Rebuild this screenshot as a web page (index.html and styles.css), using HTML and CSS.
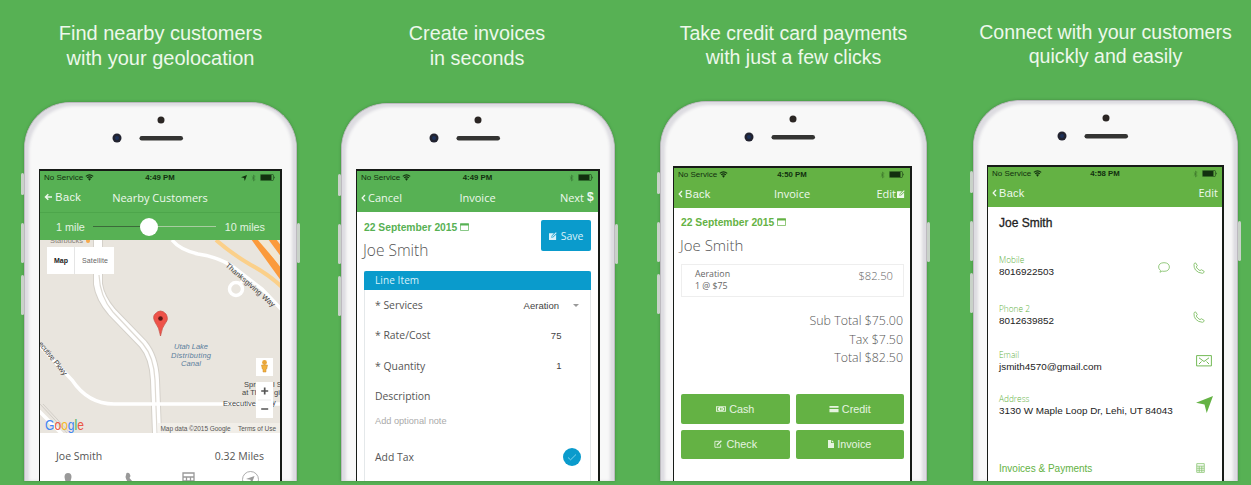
FILE: index.html
```html
<!DOCTYPE html>
<html lang="en">
<head>
<meta charset="utf-8">
<title>Mobile invoicing</title>
<link rel="stylesheet" href="styles.css">
</head>
<body>
<svg class="defs" width="0" height="0" aria-hidden="true">
  <symbol id="wifi" viewBox="0 0 10 8"><path d="M.8 2.700Q5-.7 9.200 2.700M2.300 4.400Q5 2.200 7.700 4.400" fill="none" stroke="currentColor" stroke-width="1.300"/><path d="M3.200 5.500Q5 4.200 6.800 5.500L5 7.600z" fill="currentColor"/></symbol>
  <symbol id="bt" viewBox="0 0 6 8"><path d="M1 2.200l4 3.600L3 7.500V.5l2 1.700L1 5.800" fill="none" stroke="currentColor" stroke-width=".7"/></symbol>
  <symbol id="battery" viewBox="0 0 16 7"><rect x=".4" y=".4" width="13" height="6.200" rx="1" fill="none" stroke="currentColor" stroke-width=".6"/><rect x="1" y="1" width="10.500" height="5" fill="currentColor"/><path d="M14.400 2.200q1.200 1.300 0 2.600z" fill="currentColor"/></symbol>
  <symbol id="nav" viewBox="0 0 10 10"><path d="M10 0L6.300 10 5 5 0 3.900z" fill="currentColor"/></symbol>
  <symbol id="chev" viewBox="0 0 5 8"><path d="M4 1L1.200 4 4 7" fill="none" stroke="currentColor" stroke-width="1.300"/></symbol>
  <symbol id="cal" viewBox="0 0 9 8"><path d="M.5.800h8v6.700h-8z" fill="none" stroke="currentColor" stroke-width=".7"/><path d="M.2.500h8.600v2H.2z" fill="currentColor"/></symbol>
  <symbol id="edit" viewBox="0 0 9 9"><path d="M0 1.500h5.500L3 4.200 2.600 6.500 5 6l3-3.200V9H0z" fill="currentColor"/><path d="M3.700 5.300L8.200.8" stroke="currentColor" stroke-width="1.200"/></symbol>
  <symbol id="editline" viewBox="0 0 9 9"><path d="M6 1.500H1v6.700h6.500V5" fill="none" stroke="currentColor"/><path d="M3.200 5.800L8.300.8" stroke="currentColor" stroke-width="1.500"/></symbol>
  <symbol id="phone" viewBox="0 0 12 12"><path d="M1 2.500Q1 1 2.600.900L4.300 3.600 3.200 5Q4.500 7.300 7 8.700L8.300 7.700 11.200 9.400Q11.100 11 9.500 11.300 5 11 2.500 8 .8 5.500 1 2.500z" fill="none" stroke="currentColor" stroke-width=".9" stroke-linejoin="round"/></symbol>
  <symbol id="calc" viewBox="0 0 12 13"><path d="M1 .7h10v11.600H1zM1 4h10M1 6.800h10M1 9.500h10M4.300 4v8M7.700 4v8" fill="none" stroke="currentColor" stroke-width="1.100"/></symbol>
  <symbol id="front" viewBox="0 0 100 34"><circle cx="50" cy="5" r="3.500" fill="#2b2624"/><circle cx="6" cy="23" r="4.500" fill="#222330"/><circle cx="6" cy="23" r="2" fill="#1d3159"/><rect x="28.500" y="21" width="43.500" height="4.500" rx="2.200" fill="#343433"/></symbol>
</svg>
<main class="gallery">

<section class="panel p1">
  <h2 class="caption">Find nearby customers<br>with your geolocation</h2>
  <div class="phone"><i class="key k1"></i><i class="key k2"></i><i class="key k3"></i><i class="key k4"></i>
    <svg class="front"><use href="#front"/></svg>
    <div class="screen">
      <div class="status"><span>No Service <svg class="wifi"><use href="#wifi"/></svg></span><b>4:49 PM</b><span class="end"><svg class="loc"><use href="#nav"/></svg><svg class="bt"><use href="#bt"/></svg><svg class="bat"><use href="#battery"/></svg></span></div>
      <div class="bar"><span class="arial"><svg class="arrow" viewBox="0 0 8 8"><path d="M8 4H1.500M4.300 1.200L1.500 4l2.800 2.800" fill="none" stroke="currentColor" stroke-width="1.500"/></svg> Back</span><span class="title">Nearby Customers</span><span></span></div>
      <div class="range"><span>1 mile</span><div class="track"><i class="knob"></i></div><span>10 miles</span></div>
      <svg class="map" viewBox="40 240 241 193">
        <rect x="40" y="240" width="241" height="193" fill="#e9e5de"/>
        <g fill="none" stroke="#fff">
          <path d="M98 240V284Q100 298 112 312L143 344Q154 357 155 380L157 433" stroke="#d5d1ca" stroke-width="10"/>
          <path d="M98 240V284Q100 298 112 312L143 344Q154 357 155 380L157 433" stroke-width="8"/>
          <path d="M99 275Q100 297 113 312L143 344Q154 357 155 380L157 433" stroke="#dedad3" stroke-width="1.200"/>
          <path d="M172 240Q180 250 198 254Q218 257 232 266L262 289L282 310" stroke-width="3.500"/>
          <path d="M40 346L72 380Q88 404 114 404H281" stroke-width="3.500"/>
          <path d="M38 410L62 434" stroke-width="3.500"/><path d="M40 404L68 434M43 404L71 434" stroke="#cbc8c2" stroke-width=".8"/>
          <circle cx="236" cy="289" r="6.500" stroke-width="3.500"/><path d="M240 284l4-5" stroke-width="3"/>
        </g>
        <path d="M216 240Q232 254 251 265Q268 274 282 287" fill="none" stroke="#fbd08a" stroke-width="4"/>
        <path d="M251 239h8l23 30v13zM268 239h8l6 8v11z" fill="#fb9a3c"/>
        <path d="M257 239h9l16 21v8z" fill="#f1e7d4"/>
        <g class="label">
          <text x="50" y="243" textLength="33" class="muted">Starbucks</text><circle cx="88" cy="241" r="2" fill="#f7a94b"/>
          <text transform="translate(225 266) rotate(41)" textLength="63">Thanksgiving Way</text>
          <text transform="translate(38 344) rotate(51)" textLength="41">ecutive Pkwy</text>
          <g class="water"><text x="174" y="349" textLength="34">Utah Lake</text><text x="171" y="357.500" textLength="40">Distributing</text><text x="181" y="366" textLength="20">Canal</text></g>
          <text x="244" y="387">Sprin</text><text x="273" y="387">l S</text><text x="242" y="394.500">at Th</text><text x="274" y="394.500">gi</text>
          <text x="223" y="406" textLength="33">Executive</text><text x="272" y="405">y</text>
        </g>
        <path d="M160.500 336Q159 327 155.500 323Q152 317 155 314Q160.500 308 166 314Q169 319 165.500 323Q162 327 160.500 336z" fill="#ee5249" stroke="#c54a41" stroke-width=".7"/><circle cx="160.500" cy="318.500" r="2.300" fill="#5c1715"/>
        <g class="ctl"><rect x="47" y="247" width="67" height="27"/><path d="M74.500 247v27" stroke="#e5e5e5"/><rect x="256" y="358" width="17" height="18"/><rect x="256" y="382" width="17" height="36"/><path d="M258 400h13" stroke="#ddd" stroke-width=".6"/></g>
        <text x="54" y="262.500" class="mt bold" textLength="14" lengthAdjust="spacingAndGlyphs">Map</text><text x="82" y="262.500" class="mt" textLength="26">Satellite</text>
        <circle cx="264.500" cy="362.500" r="2.400" fill="#e9a63a"/><path d="M261.500 365h6l-.8 4h-.7v3h-3v-3h-.7z" fill="#f2b13e" stroke="#c98a30" stroke-width=".5"/>
        <path d="M261.200 391h7M264.700 387.500v7M261.200 409h7" stroke="#555" stroke-width="1.700"/>
        <rect x="158" y="423" width="123" height="10" fill="#f3f0eb" opacity=".75"/>
        <text x="160.500" y="431" class="legal" textLength="70">Map data ©2015 Google</text><text x="238" y="431" class="legal" textLength="38">Terms of Use</text>
        <text x="45" y="430" class="google" textLength="39" lengthAdjust="spacingAndGlyphs"><tspan fill="#4285f4">G</tspan><tspan fill="#ea5545">o</tspan><tspan fill="#f4b82b">o</tspan><tspan fill="#4285f4">g</tspan><tspan fill="#3fae5b">l</tspan><tspan fill="#ea5545">e</tspan></text>
      </svg>
      <div class="person"><span>Joe Smith</span><span>0.32 Miles</span></div>
      <div class="actions">
        <svg viewBox="0 0 18 18"><path d="M6.500 8Q6.500 4 10 4t3.500 4Q13 12 10 18 7 12 6.500 8z" fill="currentColor"/></svg>
        <svg viewBox="0 0 18 18"><path d="M7.500 4Q10.500 2.500 11.500 7L10.500 9l6 7v2Q8 15 6.500 8z" fill="currentColor"/></svg>
        <svg viewBox="0 0 18 18"><path d="M3 4h11v14H3zM3 8h11M3 12h11M6.500 8v9M10.500 8v9" fill="none" stroke="currentColor" stroke-width="1.300"/></svg>
        <svg viewBox="0 0 18 18"><circle cx="9.500" cy="10.500" r="8" fill="none" stroke="currentColor" stroke-width=".8"/><path d="M13.500 7l-3 8-1-4.200-4.500-.8z" fill="currentColor"/></svg>
      </div>
    </div>
  </div>
</section>

<section class="panel p2">
  <h2 class="caption">Create invoices<br>in seconds</h2>
  <div class="phone"><i class="key k1"></i><i class="key k2"></i><i class="key k3"></i><i class="key k4"></i>
    <svg class="front"><use href="#front"/></svg>
    <div class="screen">
      <div class="status"><span>No Service <svg class="wifi"><use href="#wifi"/></svg></span><b>4:49 PM</b><span class="end"><svg class="bt"><use href="#bt"/></svg><svg class="bat"><use href="#battery"/></svg></span></div>
      <div class="bar"><span><svg class="chev"><use href="#chev"/></svg>Cancel</span><span class="title">Invoice</span><span class="end">Next<b class="arial dollar">$</b></span></div>
      <div class="head"><div><div class="date">22 September 2015 <svg class="cal"><use href="#cal"/></svg></div><div class="client">Joe Smith</div></div><div class="save"><svg class="edit"><use href="#edit"/></svg>Save</div></div>
      <div class="item">
        <div class="itemhead">Line Item</div>
        <div class="row"><span>* Services</span><span class="val pick">Aeration<i class="caret"></i></span></div>
        <div class="row"><span>* Rate/Cost</span><span class="val num">75</span></div>
        <div class="row"><span>* Quantity</span><span class="val num">1</span></div>
        <div class="row"><span>Description</span></div>
        <div class="note">Add optional note</div>
        <div class="row tax"><span>Add Tax</span><svg class="check" viewBox="0 0 18 18"><circle cx="9" cy="9" r="9" fill="#0a9bcc"/><path d="M5 9.500l2.600 2.300L13 6.500" fill="none" stroke="#7fd4ee"/></svg></div>
      </div>
    </div>
  </div>
</section>

<section class="panel p3">
  <h2 class="caption">Take credit card payments<br>with just a few clicks</h2>
  <div class="phone"><i class="key k1"></i><i class="key k2"></i><i class="key k3"></i><i class="key k4"></i>
    <svg class="front"><use href="#front"/></svg>
    <div class="screen">
      <div class="status"><span>No Service <svg class="wifi"><use href="#wifi"/></svg></span><b>4:50 PM</b><span class="end"><svg class="bt"><use href="#bt"/></svg><svg class="bat"><use href="#battery"/></svg></span></div>
      <div class="bar"><span class="arial"><svg class="chev"><use href="#chev"/></svg>Back</span><span class="title">Invoice</span><span class="end">Edit<svg class="edit"><use href="#edit"/></svg></span></div>
      <div class="head"><div><div class="date">22 September 2015 <svg class="cal"><use href="#cal"/></svg></div><div class="client">Joe Smith</div></div></div>
      <div class="line"><div>Aeration<br>1 @ $75</div><span>$82.50</span></div>
      <div class="totals">Sub Total $75.00<br>Tax $7.50<br>Total $82.50</div>
      <div class="pay">
        <div><svg viewBox="0 0 11 8"><path d="M0 1h11v6H0z" fill="currentColor"/><path d="M1 2h2v1H2v2h1v1H1zM10 2H8v1h1v2H8v1h2zM4.500 2.500h.8v3h-.8zM6.200 2.500h.8v3h-.8z" fill="#64b244"/></svg>Cash</div>
        <div><svg viewBox="0 0 11 8"><path d="M.5.800h10v1.700H.5zM.5 4h10v3.500H.5z" fill="currentColor"/></svg>Credit</div>
        <div><svg viewBox="0 0 9 9"><use href="#editline"/></svg>Check</div>
        <div><svg class="doc" viewBox="0 0 6 8"><path d="M0 0h3v3h3v5H0zM3.700 0L6 2.300H3.700z" fill="currentColor"/></svg>Invoice</div>
      </div>
    </div>
  </div>
</section>

<section class="panel p4">
  <h2 class="caption">Connect with your customers<br>quickly and easily</h2>
  <div class="phone"><i class="key k1"></i><i class="key k2"></i><i class="key k3"></i><i class="key k4"></i>
    <svg class="front"><use href="#front"/></svg>
    <div class="screen">
      <div class="status"><span>No Service <svg class="wifi"><use href="#wifi"/></svg></span><b>4:58 PM</b><span class="end"><svg class="bt"><use href="#bt"/></svg><svg class="bat"><use href="#battery"/></svg></span></div>
      <div class="bar"><span class="arial"><svg class="chev"><use href="#chev"/></svg>Back</span><span class="end">Edit</span></div>
      <div class="name">Joe Smith</div>
      <div class="field mobile"><div><small>Mobile</small><p>8016922503</p></div><svg class="bubble" viewBox="0 0 12 11"><path d="M2 10.300L2.500 8.500Q.6 7 .6 5 .8.800 6 .7q5.200.1 5.400 4.300Q11.200 9.300 6 9.300 4.500 9.300 4 9z" fill="none" stroke="currentColor" stroke-width=".9"/></svg><svg class="tel"><use href="#phone"/></svg></div>
      <div class="field second"><div><small>Phone 2</small><p>8012639852</p></div><svg class="tel"><use href="#phone"/></svg></div>
      <div class="field email"><div><small>Email</small><p>jsmith4570@gmail.com</p></div><svg class="mail" viewBox="0 0 16 12"><path d="M.6.600h14.800v10.300H.6zM3 2.800l5 3.700 5-3.700M3 9l2.500-2.500M13 9l-2.500-2.500" fill="none" stroke="currentColor" stroke-width=".9"/></svg></div>
      <div class="field address"><div><small>Address</small><p>3130 W Maple Loop Dr, Lehi, UT 84043</p></div><svg class="go"><use href="#nav"/></svg></div>
      <div class="field more"><div>Invoices &amp; Payments</div><svg class="calc"><use href="#calc"/></svg></div>
    </div>
  </div>
</section>
</main>
</body>
</html>
```
FILE: styles.css
```css
* { box-sizing: border-box; }
body { margin: 0; background: #57b154; font-family: "Liberation Sans", Arial, sans-serif; }
.defs { display: block; position: absolute; }
.gallery { display: grid; grid-template-columns: 317px 319px 313px 265px; padding-left: 24px; height: 485px; overflow: hidden; }
.panel { --accent: #57b154; display: flex; flex-direction: column; height: 481px; }
.p1 { width: 273px; }
.p2 { width: 274px; }
.p3 { width: 267px; }
.p3, .p4 { --accent: #64b244; }
.caption { margin: 0; flex: none; height: 102px; padding-top: 21px; font-size: 20px; font-weight: 300; line-height: 25px; color: #edf8eb; text-align: center; white-space: nowrap; }
.p2 .caption { height: 103px; font-size: 19.800px; margin-left: -2px; }
.p3 .caption { height: 101px; font-size: 19.500px; line-height: 24px; }
.p4 .caption { height: 100px; padding-top: 20px; font-size: 19.600px; line-height: 24px; }
.phone { position: relative; flex: 1; min-height: 0; display: flex; flex-direction: column; border: solid #bdbac0; border-width: 1px 1px 0; border-radius: 46px 46px 0 0; padding: 0 14px; background: #f8f8f8; box-shadow: inset 4px 3px 3px #dddce1, inset -4px 0 3px #dddce1, 0 0 3px #418b40; }
.p3 .phone { padding-left: 12px; }
.p4 .phone { padding: 0 13px; }
.key { position: absolute; width: 3px; background: #c9d2c9; border-radius: 2px; }
.k1 { left: -4px; top: 70px; height: 22px; }
.k2 { left: -4px; top: 120px; height: 40px; }
.k3 { left: -4px; top: 172px; height: 40px; }
.k4 { right: -4px; top: 120px; height: 40px; }
.front { width: 100px; height: 34px; margin: 12px auto 20px; flex: none; }
.p2 .front { margin-top: 11px; }
.p3 .front, .p4 .front { margin-bottom: 18px; }
.screen { flex: 1; min-height: 0; overflow: hidden; border: solid #171b17; border-width: 2px 2px 0 1px; background: #fff; display: flex; flex-direction: column; }
svg { flex: none; }
.status, .bar { display: grid; grid-template-columns: 1fr auto 1fr; align-items: center; padding: 0 4px; background: var(--accent); white-space: nowrap; flex: none; }
.status { height: 13px; font-size: 8px; color: #12300f; }
.status b { font-size: 7.800px; }
.wifi { width: 9px; height: 7px; vertical-align: -1px; }
.end { display: flex; align-items: center; justify-content: flex-end; }
.loc { width: 6px; height: 6px; margin-right: 4px; }
.bt { width: 5px; height: 8px; margin-right: 4px; opacity: .5; }
.bat { width: 16px; height: 7px; }
.bar { height: 28px; padding-bottom: 2px; color: #eef8ed; font: 11px "Open Sans", sans-serif; }
.arial { font-family: "Liberation Sans", Arial, sans-serif; letter-spacing: .3px; }
.dollar { margin-left: 3px; font-size: 12px; }
.arrow { width: 8px; height: 8px; }
.chev { width: 5px; height: 8px; margin-right: 2px; }
.p4 .bar { grid-template-columns: 1fr 1fr; }
.range { height: 28px; flex: none; display: flex; align-items: center; padding: 0 15px 0 16px; background: var(--accent); border-top: 1px solid #4da64b; font-size: 10.800px; color: #e2f3e0; }
.track { flex: 1; height: 1.500px; margin: 0 9px 0 8px; display: flex; align-items: center; background: linear-gradient(90deg, #3c6b3a 45%, #a7cda0 45%); }
.knob { width: 18px; height: 18px; margin-left: 47px; border-radius: 50%; background: #fff; flex: none; }
.map { width: 241px; height: 193px; display: block; }
.label { font: 7.500px "Liberation Sans", sans-serif; fill: #444; }
.label .muted { fill: #8a8178; }
.label .water { fill: #5a7d9c; font-style: italic; }
.ctl rect { fill: #fff; }
.mt { font-size: 7px; fill: #666; }
.mt.bold { font-weight: 700; fill: #222; }
.legal { font-size: 6.500px; fill: #555; }
.google { font-size: 15px; stroke-width: .3px; }
.person { display: flex; justify-content: space-between; height: 38px; padding: 9px 16px 0; font: 10.500px/28px "Open Sans", sans-serif; color: #555; flex: none; }
.actions { display: flex; justify-content: space-between; padding: 0 21px 0 18px; color: #999; height: 20px; flex: none; }
.actions svg { width: 18px; height: 18px; margin-top: -2px; }
.head { display: flex; justify-content: space-between; height: 59px; padding: 7px 7px 0; flex: none; }
.date { font-size: 10.300px; font-weight: 700; line-height: 18px; color: var(--accent); white-space: nowrap; }
.cal { width: 9px; height: 8px; }
.client { margin-left: -1px; font: 300 15.500px/27px "Open Sans", sans-serif; color: #555; }
.save { width: 50px; height: 31px; margin-top: 1px; border-radius: 2px; background: #0a9bcc; color: #d9f2fa; font: 10.500px "Open Sans", sans-serif; display: flex; align-items: center; justify-content: center; gap: 4px; }
.edit { width: 8px; height: 8px; }
.bar .edit { margin-left: 1px; }
.p3 .end { padding-right: 1px; }
.item { flex: 1; margin: 0 7px; border: solid #e4e8ea; border-width: 0 1px; }
.itemhead { margin: 0 -1px; height: 19px; padding-left: 11px; border-radius: 2px 2px 0 0; background: #0a9bcc; color: #d9f2fa; font: 10px/19px "Open Sans", sans-serif; letter-spacing: .1px; }
.row { display: flex; justify-content: space-between; align-items: center; height: 30.300px; padding: 0 10px; font: 10.400px "Open Sans", sans-serif; color: #555; }
.val { font: 9.500px "Liberation Sans", sans-serif; color: #444; }
.pick { display: flex; align-items: center; gap: 14px; }
.caret { border: solid transparent; border-width: 3.500px 3px 0; border-top-color: #999; margin-right: 1px; }
.num { margin-right: 18px; letter-spacing: .4px; }
.note { height: 20px; padding: 0 10px; font-size: 9.200px; line-height: 20px; color: #aaa; }
.tax { margin-top: 11px; }
.check { width: 18px; height: 18px; margin-right: -1px; }
.p3 .bar, .p4 .bar { height: 27px; }
.p3 .head { height: 56px; padding-top: 6px; }
.p3 .client { font-size: 15px; }
.line { margin: 0 6px 0 7px; height: 33px; flex: none; border: 1px solid #eee; display: flex; justify-content: space-between; padding: 3px 10px 0 13px; font: 8.800px/12px "Open Sans", sans-serif; color: #666; }
.line span { font: 300 11.200px/15px "Open Sans", sans-serif; }
.totals { margin: 15px 7px 0; text-align: right; font: 300 12.400px/18.700px "Open Sans", sans-serif; color: #555; }
.pay { display: grid; grid-template-columns: 1fr 1fr; gap: 6px; margin: 26px 6px 0 7px; }
.pay div { height: 29.500px; border-radius: 2px; background: #64b244; color: #e6f4e0; font-size: 10.800px; display: flex; align-items: center; justify-content: center; gap: 3px; }
.pay svg { width: 10px; height: 8px; }
.pay .doc { width: 6px; }
.name { height: 48px; padding: 6px 11px 0; font-size: 12px; line-height: 20px; color: #222; -webkit-text-stroke: .3px #222; flex: none; }
.field { display: flex; padding-left: 11px; flex: none; color: #64b244; }
.field > div { flex: 1; white-space: nowrap; }
.field small { display: block; margin-bottom: 1px; font: 300 8.300px/10px "Open Sans", sans-serif; }
.field p { margin: 0; font-size: 9.900px; line-height: 12px; color: #222; }
.mobile { height: 49px; }
.second { height: 45.500px; }
.email { height: 44px; }
.address { height: 68.500px; }
.more { font-size: 10px; line-height: 14px; }
.bubble { width: 12px; height: 11px; margin: 7px 23px 0 0; opacity: .75; }
.tel { width: 12px; height: 12px; margin: 7px 17px 0 0; opacity: .8; }
.mail { width: 16px; height: 12px; margin: 5px 10px 0 0; }
.go { width: 17px; height: 17px; margin: 2px 9px 0 0; }
.calc { width: 9px; height: 12px; margin-right: 17px; opacity: .75; }
```
